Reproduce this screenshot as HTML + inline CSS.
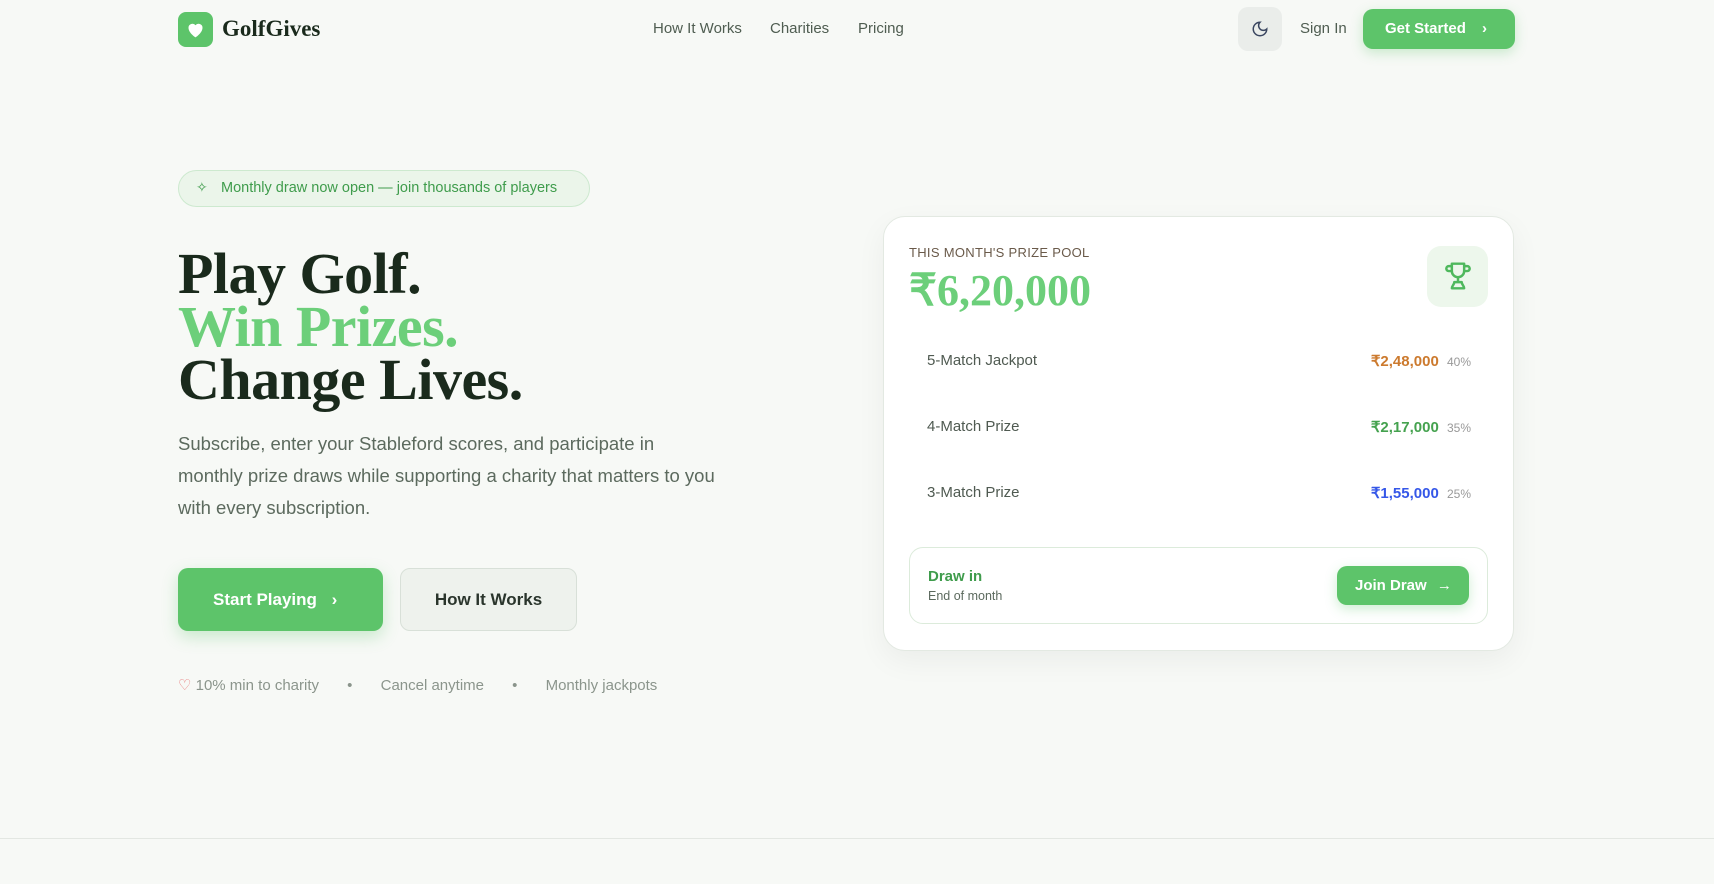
<!DOCTYPE html>
<html><head><meta charset="utf-8"><style>
*{margin:0;padding:0;box-sizing:border-box}
body{width:1714px;height:884px;background:#f7f9f6;font-family:"Liberation Sans",sans-serif;position:relative;overflow:hidden;color:#1a2a1c}
.a{position:absolute}
.serif{font-family:"Liberation Serif",serif;font-weight:bold}
.nav{font-size:15px;color:#4f5d51;top:20px}
.green{background:#5dc46a}
</style></head><body>
<div class="a green" style="left:178px;top:12px;width:35px;height:35px;border-radius:8px"></div>
<svg class="a" style="left:185px;top:19px" width="21" height="21" viewBox="0 0 24 24"><path d="M12 21s-8-5-8-11a4.5 4.5 0 0 1 8-2.8A4.5 4.5 0 0 1 20 10c0 6-8 11-8 11z" fill="#fff"/></svg>
<div class="a serif" style="left:222px;top:16px;font-size:23px;color:#1a2a1c">GolfGives</div>
<div class="a nav" style="left:653px">How It Works</div>
<div class="a nav" style="left:770px">Charities</div>
<div class="a nav" style="left:858px">Pricing</div>
<div class="a" style="left:1238px;top:7px;width:44px;height:44px;border-radius:10px;background:#eaedea"></div>
<svg class="a" style="left:1251px;top:20px" width="18" height="18" viewBox="0 0 24 24" fill="none" stroke="#3a4660" stroke-width="2" stroke-linecap="round"><path d="M12 3a6 6 0 0 0 9 9 9 9 0 1 1-9-9z"/></svg>
<div class="a nav" style="left:1300px;top:20px">Sign In</div>
<div class="a green" style="left:1363px;top:9px;width:152px;height:40px;border-radius:10px;box-shadow:0 4px 12px rgba(93,196,106,.3);color:#fff;font-weight:bold;font-size:15px;line-height:40px;padding-left:22px">Get Started <span style="margin-left:12px">›</span></div>

<div class="a" style="left:178px;top:170px;width:412px;height:37px;border-radius:19px;background:#ebf5ea;border:1px solid #cde9cf;color:#3f9c4c;font-size:14.5px;line-height:35px;padding-left:42px;white-space:nowrap">Monthly draw now open — join thousands of players</div>
<div class="a" style="left:196px;top:179px;color:#3f9c4c;font-size:14px">✧</div>
<div class="a serif" style="left:178px;top:247px;font-size:58px;line-height:53px;letter-spacing:-0.5px;white-space:nowrap">Play Golf.<br><span style="color:#6ccf7a">Win Prizes.</span><br>Change Lives.</div>
<div class="a" style="left:178px;top:428px;width:545px;font-size:18.5px;line-height:32px;color:#5c6a5e">Subscribe, enter your Stableford scores, and participate in monthly prize draws while supporting a charity that matters to you with every subscription.</div>
<div class="a green" style="left:178px;top:568px;width:205px;height:63px;border-radius:10px;color:#fff;font-weight:bold;font-size:17px;line-height:63px;padding-left:35px;box-shadow:0 6px 16px rgba(93,196,106,.3)">Start Playing <span style="margin-left:10px">›</span></div>
<div class="a" style="left:400px;top:568px;width:177px;height:63px;border-radius:10px;background:#eef2ed;border:1px solid #d8e0d8;font-weight:bold;font-size:17px;line-height:61px;text-align:center;color:#2a352c">How It Works</div>
<div class="a" style="left:178px;top:676px;font-size:15px;color:#8b958c;white-space:nowrap"><span style="color:#e87b7b">♡</span> 10% min to charity <span style="margin:0 24px">•</span> Cancel anytime <span style="margin:0 24px">•</span> Monthly jackpots</div>
<div class="a" style="left:0;top:838px;width:1714px;height:1px;background:#e3e7e2"></div>

<div class="a" style="left:883px;top:216px;width:631px;height:435px;border-radius:22px;background:#fff;border:1px solid #e3e9e2;box-shadow:0 10px 30px rgba(0,0,0,.05)"></div>
<div class="a" style="left:909px;top:245px;font-size:13px;color:#6a5a4a;letter-spacing:.3px">THIS MONTH'S PRIZE POOL</div>
<div class="a serif" style="left:909px;top:265px;font-size:44px;color:#6ccf7a">₹6,20,000</div>
<div class="a" style="left:1427px;top:246px;width:61px;height:61px;border-radius:14px;background:#edf7ec"></div>
<svg class="a" style="left:1443px;top:260px" width="30" height="32" viewBox="0 0 24 26" fill="none" stroke="#4fb85d" stroke-width="2" stroke-linecap="round" stroke-linejoin="round"><path d="M7 3h10v6a5 5 0 0 1-10 0z"/><path d="M7 5H4.5a2 2 0 0 0 0 4H7M17 5h2.5a2 2 0 0 1 0 4H17"/><path d="M12 14v4M9 18c0 2-2 3-2 5h10c0-2-2-3-2-5z"/></svg>
<div class="a" style="left:927px;top:352px;font-size:15px;color:#4f5a51">5-Match Jackpot</div>
<div class="a" style="left:927px;top:418px;font-size:15px;color:#4f5a51">4-Match Prize</div>
<div class="a" style="left:927px;top:484px;font-size:15px;color:#4f5a51">3-Match Prize</div>
<div class="a" style="right:243px;top:352px;font-size:15px;font-weight:bold;color:#cc7a2e">₹2,48,000 <span style="font-weight:normal;font-size:12px;color:#999;margin-left:4px">40%</span></div>
<div class="a" style="right:243px;top:418px;font-size:15px;font-weight:bold;color:#45a24f">₹2,17,000 <span style="font-weight:normal;font-size:12px;color:#999;margin-left:4px">35%</span></div>
<div class="a" style="right:243px;top:484px;font-size:15px;font-weight:bold;color:#3557e8">₹1,55,000 <span style="font-weight:normal;font-size:12px;color:#999;margin-left:4px">25%</span></div>
<div class="a" style="left:909px;top:547px;width:579px;height:77px;border-radius:14px;border:1px solid #dcebdb"></div>
<div class="a" style="left:928px;top:568px;font-size:15px;font-weight:bold;color:#3f9c4c">Draw in</div>
<div class="a" style="left:928px;top:589px;font-size:12.5px;color:#5c6a5e">End of month</div>
<div class="a green" style="left:1337px;top:566px;width:132px;height:39px;border-radius:10px;color:#fff;font-weight:bold;font-size:15px;line-height:39px;padding-left:18px;box-shadow:0 4px 12px rgba(93,196,106,.3)">Join Draw <span style="margin-left:6px">→</span></div>
</body></html>
